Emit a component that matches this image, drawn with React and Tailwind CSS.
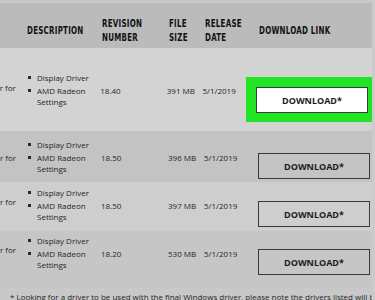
import React from "react";

const rows = [
  { ver: "18.40", size: "391 MB", date: "5/1/2019", bg: "bg-[#d3d3d3]", h: "h-[83px]", pt: "pt-[24px]", lead: "mt-[10px]", highlight: true },
  { ver: "18.50", size: "396 MB", date: "5/1/2019", bg: "bg-[#c3c3c3]", h: "h-[51px]", pt: "pt-[8px]", lead: "mt-[13px]" },
  { ver: "18.50", size: "397 MB", date: "5/1/2019", bg: "bg-[#cecece]", h: "h-[49px]", pt: "pt-[5px]", lead: "mt-[9px]" },
  { ver: "18.20", size: "530 MB", date: "5/1/2019", bg: "bg-[#c6c6c6]", h: "h-[56px]", pt: "pt-[4px]", lead: "mt-[9px]" },
];

const head = "[font-family:'DejaVu_Sans_Condensed','DejaVu_Sans',sans-serif] font-bold text-[10px] leading-[14px] tracking-[0.3px] text-[#111111]";
const body = "[font-family:'Open_Sans',sans-serif] text-[8px] leading-[11px] text-[#262626]";

// narrow, blocky heading face
function H({ children }) {
  return <span className="inline-block origin-left scale-x-[0.79] whitespace-nowrap">{children}</span>;
}

function Bullet({ children }) {
  return (
    <li className="flex items-start">
      <span className="mt-[4px] ml-[1px] mr-[6px] h-[3px] w-[3px] shrink-0 bg-[#2a2a2a]" />
      <span>{children}</span>
    </li>
  );
}

function DownloadButton({ white }) {
  return (
    <div
      className={`flex h-[26px] w-[112px] items-center justify-center border-[1.5px] border-[#3a3a3a] [font-family:'Open_Sans',sans-serif] text-[9px] font-bold text-[#1c1c1c] ${
        white ? "bg-white" : "bg-transparent"
      }`}
    >
      DOWNLOAD*
    </div>
  );
}

export default function App() {
  return (
    <div className="flex h-[300px] w-[375px] overflow-hidden bg-[#c8c8c8]">
      <div className="flex w-[372px] flex-col">
        {/* column headings */}
        <div className="h-[3px] shrink-0 bg-[#c9c9c9]" />
        <div className={`flex h-[45px] shrink-0 items-center bg-[#bbbbbb] pt-[11px] ${head}`}>
          <div className="w-[27px]" />
          <div className="w-[74px]">
            <H>DESCRIPTION</H>
          </div>
          <div className="flex w-[67px] flex-col pl-[1px]">
            <H>REVISION</H>
            <H>NUMBER</H>
          </div>
          <div className="flex w-[36px] flex-col pl-[1px]">
            <H>FILE</H>
            <H>SIZE</H>
          </div>
          <div className="flex w-[54px] flex-col pl-[1px]">
            <H>RELEASE</H>
            <H>DATE</H>
          </div>
          <div className="pl-[1px]">
            <H>DOWNLOAD LINK</H>
          </div>
        </div>

        {/* driver rows */}
        {rows.map((r, i) => (
          <div key={i} className={`flex shrink-0 items-start ${r.h} ${r.pt} ${r.bg} ${body}`}>
            <div className={`flex w-[27px] justify-end overflow-hidden pr-[11px] whitespace-nowrap ${r.lead}`}>
              Driver for
            </div>
            <ul className="flex w-[74px] flex-col gap-[2px]">
              <Bullet>Display Driver</Bullet>
              <Bullet>
                AMD Radeon
                <br />
                Settings
              </Bullet>
            </ul>
            <div className="mt-[13px] w-[67px]">{r.ver}</div>
            <div className="mt-[13px] w-[36px] whitespace-nowrap">{r.size}</div>
            <div className="mt-[13px] w-[54px]">{r.date}</div>
            {r.highlight ? (
              <div className="-ml-[10px] mt-[5px] bg-[#22e424] pt-[10px] pb-[9px] pl-[10px] pr-[4px]">
                <DownloadButton white />
              </div>
            ) : (
              <div className="mt-[14px]">
                <DownloadButton />
              </div>
            )}
          </div>
        ))}

        {/* footnote */}
        <div className={`shrink-0 bg-[#c8c8c8] pl-[10px] pt-[4px] whitespace-nowrap ${body} text-[#3a3a3a]`}>
          * Looking for a driver to be used with the final Windows driver, please note the drivers listed will be
        </div>
      </div>
      <div className="w-[3px] bg-[#cbcbcb]" />
    </div>
  );
}
